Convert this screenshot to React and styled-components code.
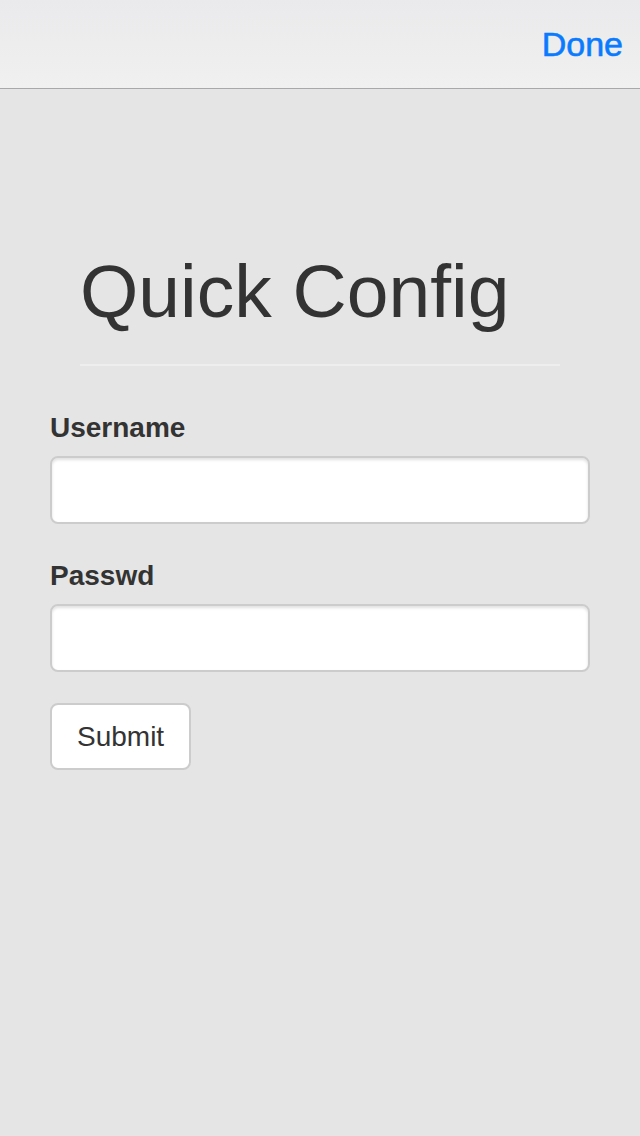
import styled, { createGlobalStyle } from "styled-components";

const Global = createGlobalStyle`
    body{
        margin: 0;
        background: #e5e5e5;
        font-family: "Liberation Sans", Arial, sans-serif;
        color: #333;
    }
`
const Page = styled.div`
    min-height: 1136px;
    display: flex;
    flex-direction: column;
`
const NavBar = styled.div`
    height: 88px;
    display: flex;
    align-items: center;
    justify-content: flex-end;
    padding: 0 17px;
    background: linear-gradient(#eaeaec, #f0f0f0);
    border-bottom: 1px solid #a8a8aa;
`
const NavButton = styled.button`
    border: 0;
    background: none;
    padding: 0;
    font-family: "Liberation Sans", Arial, sans-serif;
    font-size: 34px;
    color: #0a7bff;
    -webkit-text-stroke: 0.6px #0a7bff;
    cursor: pointer;
`
const Hero = styled.div`
    padding: 0 80px;
    margin-top: 161px;
`
const Title = styled.h1`
    margin: 0;
    font-size: 75px;
    font-weight: 400;
    line-height: 82px;
    color: #333;
`
const Rule = styled.hr`
    margin: 32px 0 0;
    border: 0;
    border-top: 2px solid #eeeeee;
`
const Form = styled.form`
    padding: 0 50px;
    margin-top: 40px;
    display: flex;
    flex-direction: column;
    align-items: flex-start;
`
const Group = styled.div`
    width: 100%;
    margin-bottom: 30px;
`
const Label = styled.label`
    display: block;
    font-size: 28px;
    font-weight: 700;
    line-height: 40px;
    padding-top: 2px;
    margin-bottom: 8px;
`
const Input = styled.input`
    display: block;
    box-sizing: border-box;
    width: 100%;
    height: 68px;
    border: 2px solid #cccccc;
    border-radius: 8px;
    background: #fff;
    box-shadow: inset 0 2px 3px rgba(0,0,0,0.12);
    font-size: 28px;
    padding: 0 20px;
    outline: none;
`
const Button = styled.button`
    box-sizing: border-box;
    height: 67px;
    padding: 0 25px;
    margin-top: 1px;
    border: 2px solid #cccccc;
    border-radius: 8px;
    background: #fff;
    font-family: "Liberation Sans", Arial, sans-serif;
    font-size: 28px;
    color: #333;
`

export default function App(){
    return(
    <>
        <Global />
        <Page>
            <NavBar>
                <NavButton>Done</NavButton>
            </NavBar>
            <Hero>
                <Title>Quick Config</Title>
                <Rule />
            </Hero>
            <Form onSubmit={e => e.preventDefault()}>
                <Group>
                    <Label>Username</Label>
                    <Input type="text"/>
                </Group>
                <Group>
                    <Label>Passwd</Label>
                    <Input type="password"/>
                </Group>
                <Button type="submit">Submit</Button>
            </Form>
        </Page>
    </>
    )
}
